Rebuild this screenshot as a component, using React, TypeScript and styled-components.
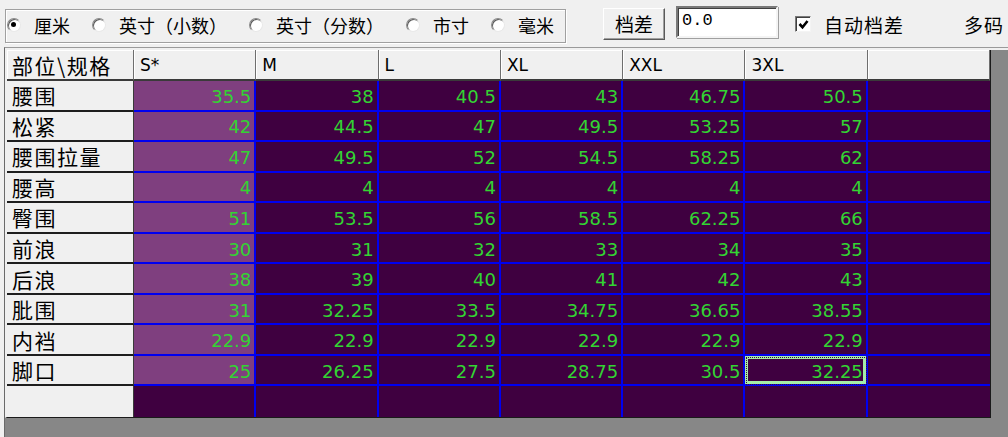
import React from "react";
import styled, { createGlobalStyle, css } from "styled-components";

const UNITS = ["厘米", "英寸（小数）", "英寸（分数）", "市寸", "毫米"];
const SIZES = ["S*", "M", "L", "XL", "XXL", "3XL", ""];

const ROWS: { part: string; values: string[] }[] = [
	{ part: "腰围", values: ["35.5", "38", "40.5", "43", "46.75", "50.5"] },
	{ part: "松紧", values: ["42", "44.5", "47", "49.5", "53.25", "57"] },
	{ part: "腰围拉量", values: ["47", "49.5", "52", "54.5", "58.25", "62"] },
	{ part: "腰高", values: ["4", "4", "4", "4", "4", "4"] },
	{ part: "臀围", values: ["51", "53.5", "56", "58.5", "62.25", "66"] },
	{ part: "前浪", values: ["30", "31", "32", "33", "34", "35"] },
	{ part: "后浪", values: ["38", "39", "40", "41", "42", "43"] },
	{ part: "肶围", values: ["31", "32.25", "33.5", "34.75", "36.65", "38.55"] },
	{ part: "内裆", values: ["22.9", "22.9", "22.9", "22.9", "22.9", "22.9"] },
	{ part: "脚口", values: ["25", "26.25", "27.5", "28.75", "30.5", "32.25"] },
];

const BASE_COL = 0;
const FOCUS = { row: 9, col: 5 };

const cjk = `"Noto Sans CJK SC", "DejaVu Sans", sans-serif`;
const latin = `"DejaVu Sans", "Noto Sans CJK SC", sans-serif`;

const GlobalStyle = createGlobalStyle`
	html, body {
		margin: 0;
		padding: 0;
		background: #f0f0f0;
	}
	body {
		width: 1008px;
		height: 437px;
		overflow: hidden;
		font-family: ${cjk};
	}
`;

const Window = styled.div`
	width: 1008px;
	height: 437px;
	display: flex;
	flex-direction: column;
	overflow: hidden;
`;

const Toolbar = styled.div`
	height: 47px;
	flex: none;
	display: flex;
	align-items: flex-start;
	padding-top: 6px;
	box-sizing: border-box;
	white-space: nowrap;
	color: #000;
	font-size: 18px;
`;

const UnitBox = styled.div`
	margin: 3px 0 0 5px;
	width: 561px;
	height: 34px;
	box-sizing: border-box;
	border: 1px solid #a0a0a0;
	box-shadow: inset 1px 1px 0 #fff, 1px 1px 0 #fff;
	display: flex;
	align-items: center;
	padding: 0 0 2px 1px;
`;

const RadioItem = styled.label`
	display: flex;
	align-items: center;
	margin-right: 22px;
	&:last-child {
		margin-right: 0;
	}
`;

const RadioDot = styled.span<{ $checked?: boolean }>`
	position: relative;
	width: 14px;
	height: 14px;
	box-sizing: border-box;
	border-radius: 50%;
	background: #fff;
	border: 1px solid;
	border-color: #8a8a8a #e8e8e8 #e8e8e8 #8a8a8a;
	box-shadow: inset 1px 1px 0 #5a5a5a;
	margin-right: 13px;
	flex: none;
	${(p) =>
		p.$checked &&
		css`
			&::after {
				content: "";
				position: absolute;
				left: 3px;
				top: 3px;
				width: 5px;
				height: 5px;
				border-radius: 50%;
				background: #000;
			}
		`}
`;

const StepButton = styled.button`
	margin: 2px 0 0 37px;
	width: 62px;
	height: 32px;
	box-sizing: border-box;
	background: #f0f0f0;
	border: 1px solid;
	border-color: #fff #5a5a5a #5a5a5a #fff;
	box-shadow: inset -1px -1px 0 #a0a0a0;
	font-family: ${cjk};
	font-size: 19px;
	color: #000;
	padding: 0 0 2px;
`;

const StepInput = styled.div`
	margin-left: 11px;
	width: 102px;
	height: 32px;
	box-sizing: border-box;
	background: #fff;
	border: 2px solid;
	border-color: #7a7a7a #f4f4f4 #f4f4f4 #7a7a7a;
	box-shadow: inset 1px 1px 0 #404040, 1px 1px 0 #a0a0a0;
	font-family: "Liberation Mono", monospace;
	font-size: 17px;
	line-height: 26px;
	padding-left: 4px;
	color: #000;
`;

const CheckLabel = styled.label`
	margin: 2px 0 0 17px;
	height: 32px;
	display: flex;
	align-items: center;
	font-size: 19px;
	letter-spacing: 1px;
`;

const CheckBox = styled.span`
	width: 16px;
	height: 16px;
	box-sizing: border-box;
	background: #fff;
	border: 1px solid;
	border-color: #7a7a7a #f4f4f4 #f4f4f4 #7a7a7a;
	box-shadow: inset 1px 1px 0 #404040;
	margin-right: 13px;
	display: flex;
	align-items: center;
	justify-content: center;
`;

const MultiSize = styled.span`
	margin: 2px 0 0 60px;
	height: 32px;
	display: flex;
	align-items: center;
	font-size: 19px;
	letter-spacing: 1px;
`;

const Panel = styled.div`
	flex: 1;
	margin-left: 4px;
	border-top: 1px solid #9a9a9a;
	border-left: 1px solid #6a6a6a;
	display: flex;
	flex-direction: column;
`;

const Client = styled.div`
	flex: 1;
	border-top: 2px solid #f0f0f0;
	background: #878787;
`;

const Grid = styled.div`
	display: inline-grid;
	grid-template-columns: 127px repeat(7, 122.3px);
	grid-template-rows: 31px repeat(11, 30.55px);
	border-left: 2px solid #f0f0f0;
	border-right: 1px solid #1a1a1a;
	border-bottom: 1px solid #1a1a1a;
	vertical-align: top;
`;

const HeadCell = styled.div<{ $corner?: boolean }>`
	background: #f0f0f0;
	border-right: 1px solid #6e6e6e;
	border-bottom: 2px solid #3a3a3a;
	box-shadow: inset 1px 1px 0 #fff;
	display: flex;
	align-items: center;
	padding-left: ${(p) => (p.$corner ? "5px" : "6px")};
	font-family: ${(p) => (p.$corner ? cjk : latin)};
	font-size: ${(p) => (p.$corner ? "21px" : "17px")};
	letter-spacing: ${(p) => (p.$corner ? "1.5px" : "0")};
	color: #000;
	white-space: nowrap;
	overflow: hidden;
	&:last-child {
		border-right: none;
	}
`;

const RowHead = styled.div<{ $last?: boolean }>`
	background: #f0f0f0;
	border-right: 1px solid #3a3a3a;
	border-bottom: ${(p) => (p.$last ? "none" : "2px solid #1e1e1e")};
	display: flex;
	align-items: center;
	padding-left: 5px;
	font-family: ${cjk};
	font-size: 21px;
	letter-spacing: 1.5px;
	color: #000;
	white-space: nowrap;
`;

const DataCell = styled.div<{ $base?: boolean; $focused?: boolean; $lastCol?: boolean; $lastRow?: boolean }>`
	background: ${(p) => (p.$base ? "#7f3f7f" : "#3f0040")};
	border-right: ${(p) => (p.$lastCol ? "none" : "2px solid #0000f0")};
	border-bottom: ${(p) => (p.$lastRow ? "none" : "2px solid #0000f0")};
	display: flex;
	align-items: center;
	justify-content: flex-end;
	padding: 2px 3px 0 0;
	font-family: ${latin};
	font-size: 18px;
	color: #33d433;
	${(p) =>
		p.$focused &&
		css`
			box-shadow: inset 0 0 0 3px #a6eca6;
			outline: 1px dotted #3f0040;
			outline-offset: -2px;
		`}
`;

const Check = () => (
	<svg width="11" height="11" viewBox="0 0 11 11">
		<polyline points="1.5,5 4.5,8.2 9.5,2" fill="none" stroke="#000" strokeWidth="2.6" />
	</svg>
);

export default function App() {
	return (
		<Window>
			<GlobalStyle />
			<Toolbar>
				<UnitBox>
					{UNITS.map((u, i) => (
						<RadioItem key={u}>
							<RadioDot $checked={i === 0} />
							{u}
						</RadioItem>
					))}
				</UnitBox>
				<StepButton>档差</StepButton>
				<StepInput>0.0</StepInput>
				<CheckLabel>
					<CheckBox>
						<Check />
					</CheckBox>
					自动档差
				</CheckLabel>
				<MultiSize>多码</MultiSize>
			</Toolbar>
			<Panel>
				<Client>
					<Grid>
						<HeadCell $corner>部位\规格</HeadCell>
						{SIZES.map((s, i) => (
							<HeadCell key={i}>{s}</HeadCell>
						))}
						{ROWS.map((row, r) => (
							<React.Fragment key={row.part}>
								<RowHead>{row.part}</RowHead>
								{SIZES.map((_, c) => (
									<DataCell
										key={c}
										$base={c === BASE_COL}
										$focused={r === FOCUS.row && c === FOCUS.col}
										$lastCol={c === SIZES.length - 1}
									>
										{row.values[c] ?? ""}
									</DataCell>
								))}
							</React.Fragment>
						))}
						<RowHead $last />
						{SIZES.map((_, c) => (
							<DataCell key={c} $lastCol={c === SIZES.length - 1} $lastRow />
						))}
					</Grid>
				</Client>
			</Panel>
		</Window>
	);
}
